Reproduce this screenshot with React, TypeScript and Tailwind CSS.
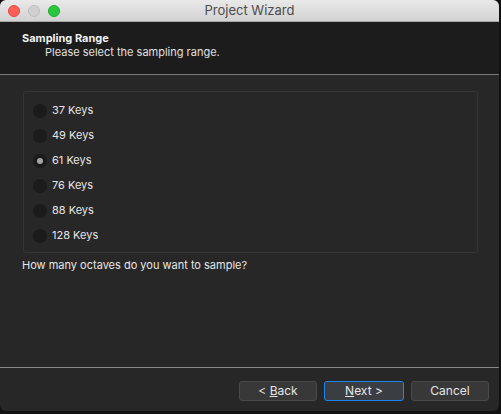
import React from "react";

const keys = ["37 Keys", "49 Keys", "61 Keys", "76 Keys", "88 Keys", "128 Keys"];

export default function App() {
  return (
    <div
      className="w-[501px] h-[414px] bg-[#111111] overflow-hidden"
      style={{ fontFamily: "Inter, 'Liberation Sans', sans-serif" }}
    >
      <div className="w-[499px] h-[411px] rounded-[6px] overflow-hidden flex flex-col bg-[#272727]">
        {/* Title bar */}
        <div className="h-[22px] shrink-0 relative flex items-center justify-center bg-gradient-to-b from-[#e9e9e9] to-[#d2d2d2] border-b border-[#a8a8a8]">
          <div className="absolute left-[8px] top-[5px] flex gap-[8px]">
            <div className="w-[12px] h-[12px] rounded-full bg-[#fe5f57] border border-[#e2463f]" />
            <div className="w-[12px] h-[12px] rounded-full bg-[#d0d0d0] border border-[#bdbdbd]" />
            <div className="w-[12px] h-[12px] rounded-full bg-[#27c83f] border border-[#1aab29]" />
          </div>
          <span className="text-[13px] text-[#4c4c4c]">Project Wizard</span>
        </div>
        {/* Header */}
        <div className="h-[53px] shrink-0 bg-[#1c1c1c] border-b border-[#7a7a7a] pl-[22px] pt-[9px]">
          <div className="text-[11px] font-bold text-[#f0f0f0] leading-[14px]">Sampling Range</div>
          <div className="text-[11px] text-[#e0e0e0] leading-[14px] pl-[23px]">Please select the sampling range.</div>
        </div>
        {/* Body */}
        <div className="flex-1 flex flex-col px-[23px] pt-[16px]">
          <div className="h-[162px] w-[455px] border border-[#363636] rounded-[3px] bg-[#272727] pt-[6px] pl-[9px] flex flex-col">
            {keys.map((k) => (
              <div key={k} className="h-[25px] flex items-center">
                <div className="w-[14px] h-[14px] rounded-full bg-[#1b1b1b] flex items-center justify-center">
                  {k === "61 Keys" && <div className="w-[6px] h-[6px] rounded-full bg-[#a5a5a5]" />}
                </div>
                <span className="ml-[5px] text-[11px] text-[#e6e6e6]">{k}</span>
              </div>
            ))}
          </div>
          <div className="mt-[5px] ml-[-1px] text-[11px] text-[#e6e6e6] leading-[14px]">
            How many octaves do you want to sample?
          </div>
        </div>
        {/* Footer */}
        <div className="h-[44px] shrink-0 border-t border-[#8a8a8a] flex items-start justify-end pr-[10px] pt-[13px] gap-[7px]">
          <button className="w-[78px] h-[20px] rounded-[3px] bg-[#383838] border border-[#4a4a4a] text-[12px] text-[#e6e6e6] leading-none">
            &lt; <span className="underline">B</span>ack
          </button>
          <button className="w-[80px] h-[20px] rounded-[3px] bg-[#3a3d42] border border-[#1b84ef] text-[12px] text-[#e6e6e6] leading-none">
            <span className="underline">N</span>ext &gt;
          </button>
          <button className="w-[78px] h-[20px] rounded-[3px] bg-[#383838] border border-[#4a4a4a] text-[12px] text-[#e6e6e6] leading-none">
            Cancel
          </button>
        </div>
      </div>
    </div>
  );
}
